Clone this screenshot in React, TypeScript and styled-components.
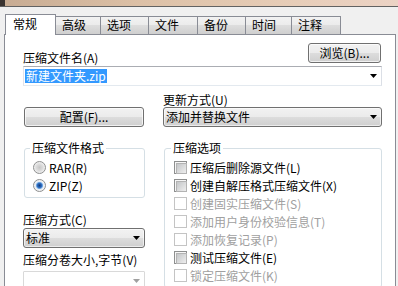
import React from "react";
import styled, { createGlobalStyle, css } from "styled-components";

const GlobalStyle = createGlobalStyle`
  html, body { margin: 0; padding: 0; }
  body {
    background: #f0f0f0;
    font-family: "Noto Sans CJK SC", "Noto Sans", sans-serif;
    font-size: 12px;
    color: #000;
  }
  * { box-sizing: border-box; }
`;

const Window = styled.div`
  width: 398px;
  height: 286px;
  overflow: hidden;
  background: #f0f0f0;
  display: flex;
  flex-direction: column;
`;

const TitleStrip = styled.div`
  height: 7px;
  flex-shrink: 0;
  display: flex;
  border-bottom: 1px solid #626262;
  background: linear-gradient(90deg, #c7ab92 0%, #dcc0a6 35%, #e6ccb6 70%, #ecd3c5 100%);
`;

const StripCorner = styled.div`
  width: 5px;
  background: #3a3330;
`;

const Body = styled.div`
  flex: 1;
  min-height: 0;
  padding: 7px 2px 0 4px;
  display: flex;
  flex-direction: column;
`;

const TabBar = styled.div`
  display: flex;
  align-items: flex-end;
  height: 20px;
  padding-left: 1px;
  flex-shrink: 0;
`;

const Tab = styled.div<{ $active?: boolean; $w: number }>`
  width: ${(p) => p.$w}px;
  height: 18px;
  padding-left: 6px;
  line-height: 16px;
  white-space: nowrap;
  border: 1px solid #898c95;
  border-bottom: none;
  margin-left: -1px;
  background: linear-gradient(#f2f2f2, #ebebeb 50%, #dddddd 50%, #cfcfcf);
  &:first-child {
    margin-left: 0;
  }
  ${(p) =>
    p.$active &&
    css`
      height: 21px;
      margin-bottom: -1px;
      background: #fff;
      position: relative;
      z-index: 1;
      line-height: 18px;
      padding-left: 7px;
    `}
`;

const Panel = styled.div`
  flex: 1;
  min-height: 0;
  border: 1px solid #898c95;
  border-bottom: none;
  background: #fff;
  padding: 8px 13px 0 18px;
`;

const TopRow = styled.div`
  display: flex;
  justify-content: space-between;
  align-items: flex-start;
  height: 20px;
`;

const FieldLabel = styled.div<{ $mt?: number }>`
  line-height: 14px;
  white-space: nowrap;
  flex-shrink: 0;
  margin-top: ${(p) => p.$mt ?? 0}px;
`;

const Button = styled.div<{ $w: number; $ml?: number; $mt?: number; $mr?: number }>`
  width: ${(p) => p.$w}px;
  height: 20px;
  flex-shrink: 0;
  margin: ${(p) => p.$mt ?? 0}px ${(p) => p.$mr ?? 0}px 0 ${(p) => p.$ml ?? 0}px;
  border: 1px solid #707070;
  border-radius: 3px;
  background: linear-gradient(#f2f2f2, #ebebeb 50%, #dddddd 50%, #cfcfcf);
  box-shadow: inset 0 0 0 1px rgba(255, 255, 255, 0.7);
  line-height: 18px;
  text-align: center;
  white-space: nowrap;
`;

const EditCombo = styled.div`
  margin-top: 3px;
  height: 20px;
  display: flex;
  align-items: center;
  justify-content: space-between;
  border: 1px solid;
  border-color: #abadb3 #dbdfe6 #e3e9ef #e2e3ea;
  background: #fff;
  padding: 0 4px 0 1px;
`;

const Selection = styled.span`
  background: #3399ff;
  color: #fff;
  line-height: 14px;
  padding: 0 1px;
`;

const Columns = styled.div`
  display: grid;
  grid-template-columns: 122px 1fr;
  column-gap: 18px;
  margin-top: 7px;
`;

const Column = styled.div`
  display: flex;
  flex-direction: column;
  min-width: 0;
`;

const DropCombo = styled.div<{ $mt?: number; $disabled?: boolean }>`
  height: 20px;
  flex-shrink: 0;
  margin-top: ${(p) => p.$mt ?? 0}px;
  display: flex;
  align-items: center;
  justify-content: space-between;
  border: 1px solid #707070;
  border-radius: 3px;
  background: linear-gradient(#f2f2f2, #ebebeb 50%, #dddddd 50%, #cfcfcf);
  box-shadow: inset 0 0 0 1px rgba(255, 255, 255, 0.6);
  padding: 0 4px 0 2px;
  line-height: 18px;
  white-space: nowrap;
  ${(p) =>
    p.$disabled &&
    css`
      border-color: #d9d9d9;
      background: #fff;
      box-shadow: none;
      border-radius: 1px;
    `}
`;

const GroupBox = styled.fieldset<{ $pl: number }>`
  margin: 14px 0 0 1px;
  padding: 0 8px 3px ${(p) => p.$pl}px;
  min-width: 0;
  flex-shrink: 0;
  border: 1px solid #d5dfe5;
  border-radius: 3px;
`;

const Legend = styled.legend`
  padding: 0 2px;
  margin-left: -3px;
  line-height: 14px;
`;

const OptionList = styled.div`
  display: flex;
  flex-direction: column;
  margin-top: 3px;
`;

const OptionRow = styled.div<{ $disabled?: boolean }>`
  display: flex;
  align-items: center;
  height: 18px;
  flex-shrink: 0;
  gap: 3px;
  white-space: nowrap;
  color: ${(p) => (p.$disabled ? "#a0a0a0" : "#000")};
`;

const RadioMark = styled.span<{ $checked?: boolean }>`
  width: 13px;
  height: 13px;
  flex-shrink: 0;
  border-radius: 50%;
  border: 1px solid #8e8f8f;
  background: radial-gradient(circle, #c6c6c6 0, #dadada 40%, #f2f2f2 75%);
  ${(p) =>
    p.$checked &&
    css`
      background: radial-gradient(circle, #163c78 0, #2c6bc0 28%, #7fb2e6 42%, #e6edf5 50%, #f4f4f4 70%);
    `}
`;

const CheckMark = styled.span<{ $disabled?: boolean }>`
  width: 13px;
  height: 13px;
  flex-shrink: 0;
  padding: 1px;
  border: 1px solid ${(p) => (p.$disabled ? "#c4c4c4" : "#8e8f8f")};
  background: #f6f6f6;
  &::after {
    content: "";
    display: block;
    width: 9px;
    height: 9px;
    border: 1px solid #b3b3b3;
    background: linear-gradient(135deg, #c4c6c8, #eeeeee);
  }
  ${(p) =>
    p.$disabled &&
    css`
      background: #fff;
      &::after {
        border-color: transparent;
        background: transparent;
      }
    `}
`;

const Arrow = ({ color = "#000" }: { color?: string }) => (
  <svg width="7" height="4" viewBox="0 0 7 4">
    <polygon points="0,0 7,0 3.5,4" fill={color} />
  </svg>
);

const tabs: { label: string; w: number }[] = [
  { label: "常规", w: 51 },
  { label: "高级", w: 46 },
  { label: "选项", w: 49 },
  { label: "文件", w: 50 },
  { label: "备份", w: 49 },
  { label: "时间", w: 47 },
  { label: "注释", w: 50 },
];

const options: { label: string; disabled?: boolean }[] = [
  { label: "压缩后删除源文件(L)" },
  { label: "创建自解压格式压缩文件(X)" },
  { label: "创建固实压缩文件(S)", disabled: true },
  { label: "添加用户身份校验信息(T)", disabled: true },
  { label: "添加恢复记录(P)", disabled: true },
  { label: "测试压缩文件(E)" },
  { label: "锁定压缩文件(K)", disabled: true },
];

export default function App() {
  return (
    <>
      <GlobalStyle />
      <Window>
        <TitleStrip>
          <StripCorner />
        </TitleStrip>
        <Body>
          <TabBar>
            {tabs.map((t, i) => (
              <Tab key={t.label} $w={t.w} $active={i === 0}>
                {t.label}
              </Tab>
            ))}
          </TabBar>
          <Panel>
            <TopRow>
              <FieldLabel $mt={8}>压缩文件名(A)</FieldLabel>
              <Button $w={73} $mr={1}>
                浏览(B)...
              </Button>
            </TopRow>
            <EditCombo>
              <Selection>新建文件夹.zip</Selection>
              <Arrow />
            </EditCombo>
            <Columns>
              <Column>
                <Button $w={120} $ml={1} $mt={14}>
                  配置(F)...
                </Button>
                <GroupBox $pl={8}>
                  <Legend>压缩文件格式</Legend>
                  <OptionList>
                    <OptionRow>
                      <RadioMark />
                      RAR(R)
                    </OptionRow>
                    <OptionRow>
                      <RadioMark $checked />
                      ZIP(Z)
                    </OptionRow>
                  </OptionList>
                </GroupBox>
                <FieldLabel $mt={15}>压缩方式(C)</FieldLabel>
                <DropCombo $mt={1}>
                  <span>标准</span>
                  <Arrow />
                </DropCombo>
                <FieldLabel $mt={5}>压缩分卷大小,字节(V)</FieldLabel>
                <DropCombo $mt={4} $disabled>
                  <span />
                  <Arrow color="#a0a0a0" />
                </DropCombo>
              </Column>
              <Column>
                <FieldLabel>更新方式(U)</FieldLabel>
                <DropCombo>
                  <span>添加并替换文件</span>
                  <Arrow />
                </DropCombo>
                <GroupBox $pl={9}>
                  <Legend>压缩选项</Legend>
                  <OptionList>
                    {options.map((o) => (
                      <OptionRow key={o.label} $disabled={o.disabled}>
                        <CheckMark $disabled={o.disabled} />
                        {o.label}
                      </OptionRow>
                    ))}
                  </OptionList>
                </GroupBox>
              </Column>
            </Columns>
          </Panel>
        </Body>
      </Window>
    </>
  );
}
